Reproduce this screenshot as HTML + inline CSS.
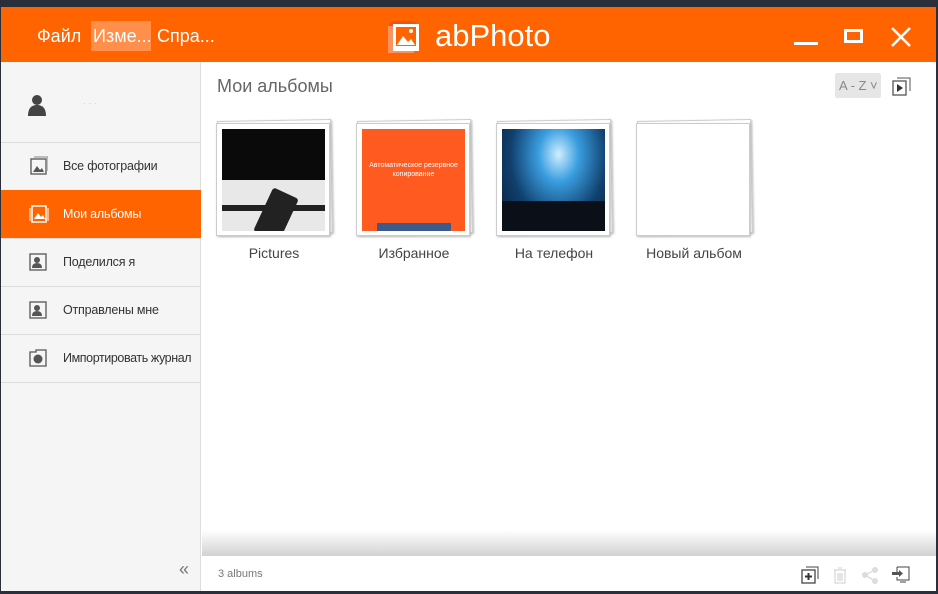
<!DOCTYPE html>
<html><head><meta charset="utf-8"><style>
*{margin:0;padding:0;box-sizing:border-box}
body{width:938px;height:594px;background:#2b2f3a;position:relative;overflow:hidden;font-family:"Liberation Sans","Noto Sans CJK SC",sans-serif}
.win{position:absolute;left:1px;top:7px;width:935px;height:584px;background:#fff;overflow:hidden}
.hdr{position:absolute;left:0;top:0;width:935px;height:55px;background:#ff6400;color:#fff}
.menu{position:absolute;top:14px;height:30px;line-height:30px;font-size:18px;white-space:nowrap}
.side{position:absolute;left:0;top:55px;width:200px;height:529px;background:#f5f5f5;border-right:1px solid #ddd}
.item{position:absolute;left:0;width:200px;height:48px;border-top:1px solid #ddd;font-size:12.5px;color:#333;line-height:46px;padding-left:62px;white-space:nowrap;letter-spacing:-0.2px}
.item svg{position:absolute;left:27px;top:13px}
.sel{background:#ff6400;color:#fff;border-top-color:#ff6400}
.card{position:absolute;top:113px;width:118px;height:116px}
.card .b1{position:absolute;left:2px;top:0;width:114px;height:114px;background:#fff;border:1px solid #ccc;transform:rotate(-1deg);box-shadow:1px 1px 2px #bbb}
.card .b2{position:absolute;left:0;top:3px;width:114px;height:113px;background:#fff;border:1px solid #ccc;box-shadow:1px 1px 2px #bbb}
.card .img{position:absolute;left:6px;top:9px;width:103px;height:102px;overflow:hidden}
.lbl{position:absolute;top:238px;font-size:14px;color:#444;text-align:center;width:140px}
</style></head><body>
<div class="win">
<div class="hdr">
 <div class="menu" style="left:36px">Файл</div>
 <div class="menu" style="left:90px;width:60px;background:#ff8f4a;padding-left:2px">Изме...</div>
 <div class="menu" style="left:156px">Спра...</div>
 <svg style="position:absolute;left:384px;top:12px" width="40" height="36" viewBox="0 0 40 36"><path d="M4 8 Q4 2 10 2 L26 2 Q32 2 34 8" fill="#e8561a"/><rect x="3" y="7" width="26" height="27" fill="#f7a07a" opacity=".8"/><rect x="8" y="5" width="26" height="27" fill="#fff"/><rect x="11" y="8" width="20" height="19" fill="#ff6400"/><path d="M12 26 L18 17 L23 23 L26 20 L30 26Z" fill="#fff"/><circle cx="26" cy="12" r="2" fill="#fff"/></svg>
 <div style="position:absolute;left:434px;top:11px;font-size:31px;line-height:36px">abPhoto</div>
 <div style="position:absolute;left:793px;top:35px;width:24px;height:3px;background:#fff"></div>
 <div style="position:absolute;left:843px;top:22px;width:19px;height:14px;border:3px solid #fff"></div>
 <svg style="position:absolute;left:889px;top:19px" width="22" height="22"><path d="M2 2L20 20M20 2L2 20" stroke="#fff" stroke-width="2.6"/></svg>
</div>
<div class="side">
 <svg style="position:absolute;left:26px;top:32px" width="20" height="22"><circle cx="10" cy="6" r="5" fill="#444"/><path d="M1 22 Q1 11 10 11 Q19 11 19 22Z" fill="#444"/></svg>
 <div style="position:absolute;left:82px;top:36px;color:#ccc;font-size:9px">· · ·</div>
 <div class="item" style="top:80px"><svg width="20" height="20"><rect x="3" y="3" width="15" height="15" fill="none" stroke="#555" stroke-width="1.3"/><path d="M5 16L9 10L12 14L14 12L16 16Z" fill="#555"/><path d="M6 1H20V15" fill="none" stroke="#888"/></svg>Все фотографии</div>
 <div class="item sel" style="top:128px"><svg width="22" height="20"><rect x="4" y="2" width="14" height="16" fill="none" stroke="#fff" stroke-width="1.5"/><path d="M6 15L10 9L13 13L15 11L17 15Z" fill="#fff"/><path d="M2 4V17M20 4V17" stroke="#fff"/></svg>Мои альбомы</div>
 <div class="item" style="top:176px"><svg width="20" height="20"><rect x="2" y="2" width="16" height="16" fill="none" stroke="#555" stroke-width="1.3"/><circle cx="9" cy="8" r="3" fill="#555"/><path d="M4 16Q4 11 9 11Q14 11 14 16Z" fill="#555"/></svg>Поделился я</div>
 <div class="item" style="top:224px"><svg width="20" height="20"><rect x="2" y="2" width="16" height="16" fill="none" stroke="#555" stroke-width="1.3"/><circle cx="9" cy="8" r="3" fill="#555"/><path d="M4 16Q4 11 9 11Q14 11 14 16Z" fill="#555"/></svg>Отправлены мне</div>
 <div class="item" style="top:272px;border-bottom:1px solid #ddd;height:49px;letter-spacing:-0.4px"><svg width="20" height="20"><path d="M2 4H8V2H18V18H2Z" fill="none" stroke="#555" stroke-width="1.3"/><circle cx="10" cy="11" r="4.5" fill="#555"/></svg>Импортировать журнал</div>
 <div style="position:absolute;left:178px;top:497px;font-size:18px;color:#777">«</div>
</div>
<div style="position:absolute;left:216px;top:69px;font-size:18px;color:#666">Мои альбомы</div>
<div style="position:absolute;left:834px;top:66px;width:46px;height:25px;background:#e6e6e6;border-radius:2px;color:#888;font-size:13px;line-height:25px;padding-left:4px">A - Z ˅</div>
<svg style="position:absolute;left:891px;top:70px" width="19" height="19"><path d="M5 1H18V14" fill="none" stroke="#555"/><rect x="1" y="4" width="13" height="14" fill="none" stroke="#555" stroke-width="1.3"/><path d="M5 7L11 11L5 15Z" fill="#333"/></svg>
<div class="card" style="left:215px"><div class="b1"></div><div class="b2"></div><div class="img" style="background:linear-gradient(#0a0a0a 0 50%,#e8e8e8 50%)"><div style="position:absolute;left:40px;top:62px;width:28px;height:48px;background:#222;transform:rotate(25deg);border-radius:3px"></div><div style="position:absolute;left:0;top:76px;width:103px;height:6px;background:#222"></div></div></div>
<div class="card" style="left:355px"><div class="b1"></div><div class="b2"></div><div class="img" style="background:#ff5a1f;color:#fff;font-size:7px;text-align:center;padding-top:32px;line-height:9px">Автоматическое резервное<br>копирование<div style="position:absolute;left:15px;bottom:0;width:74px;height:8px;background:#3c5a8c"></div></div></div>
<div class="card" style="left:495px"><div class="b1"></div><div class="b2"></div><div class="img" style="background:radial-gradient(ellipse at 55% 25%,#cfefff 0,#3a9ee0 25%,#10406e 60%,#0a1a30 100%)"><div style="position:absolute;left:0;bottom:0;width:103px;height:30px;background:#0a0f18"></div></div></div>
<div class="card" style="left:635px"><div class="b1"></div><div class="b2"></div></div>
<div class="lbl" style="left:203px;top:238px">Pictures</div>
<div class="lbl" style="left:343px;top:238px">Избранное</div>
<div class="lbl" style="left:483px;top:238px">На телефон</div>
<div class="lbl" style="left:623px;top:238px">Новый альбом</div>
<div style="position:absolute;left:201px;top:523px;width:734px;height:26px;background:linear-gradient(#fff,#d2d2d2)"></div>
<div style="position:absolute;left:217px;top:561px;font-size:11px;color:#777">3 albums</div>
<svg style="position:absolute;left:800px;top:559px" width="18" height="18"><path d="M5 1H17V13" fill="none" stroke="#444"/><rect x="1" y="4" width="13" height="13" fill="none" stroke="#444" stroke-width="1.3"/><path d="M7.5 7V14M4 10.5H11" stroke="#333" stroke-width="2"/></svg>
<svg style="position:absolute;left:830px;top:559px" width="18" height="18"><path d="M3 4H15M7 2H11M4 4V17H14V4M7 7V15M9 7V15M11 7V15" fill="none" stroke="#ccc"/></svg>
<svg style="position:absolute;left:860px;top:559px" width="18" height="18"><circle cx="14" cy="4" r="3" fill="#ddd"/><circle cx="4" cy="9" r="3" fill="#ddd"/><circle cx="14" cy="15" r="3" fill="#ddd"/><path d="M14 4L4 9L14 15" stroke="#ddd" stroke-width="1.5" fill="none"/></svg>
<svg style="position:absolute;left:890px;top:559px" width="20" height="18"><path d="M6 1H18V14H6V11M6 6V1" fill="none" stroke="#444"/><path d="M1 6H8V4L12 7.5L8 11V9H1Z" fill="#555"/><path d="M9 16H15" stroke="#444"/></svg>
</div>
</body></html>
